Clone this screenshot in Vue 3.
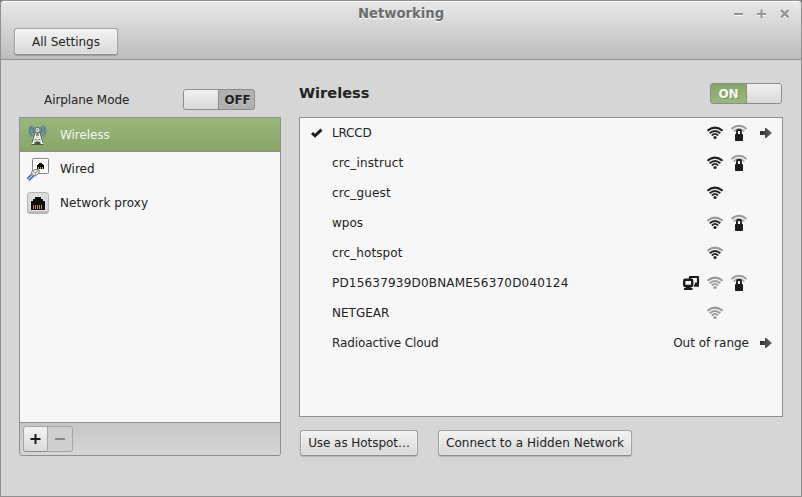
<script setup>
import { ref } from 'vue'

const devices = ref([
  { name: 'Wireless', icon: 'antenna', tracking: '-.06px' },
  { name: 'Wired', icon: 'cable' },
  { name: 'Network proxy', icon: 'socket', tracking: '.05px' },
])
const selected = ref('Wireless')

// signal: 3 = full, 2 = outer arc dimmed, 1 = weak
const networks = [
  { name: 'LRCCD', connected: true, signal: 3, secure: true, more: true, tracking: '-.2px' },
  { name: 'crc_instruct', signal: 3, secure: true, tracking: '.15px' },
  { name: 'crc_guest', signal: 3, tracking: '.15px' },
  { name: 'wpos', signal: 2, secure: true },
  { name: 'crc_hotspot', signal: 2, tracking: '.1px' },
  { name: 'PD15637939D0BNAME56370D040124', adhoc: true, signal: 1, secure: true, tracking: '.19px' },
  { name: 'NETGEAR', signal: 1 },
  { name: 'Radioactive Cloud', note: 'Out of range', more: true, tracking: '-.1px' },
]
const dark = '#222'
const dim = '#999'
const arcColor = (signal, level) => (signal >= level ? dark : dim)
</script>

<template>
  <div class="window">
    <header class="chrome">
      <div class="titlebar">
        <span class="title">Networking</span>
        <svg class="controls" width="58" height="14" viewBox="0 0 58 14">
          <g fill="none" stroke="#fff" stroke-width="2" transform="translate(0 1)">
            <path d="M1 7H10M24 7H33M28.500 2.500V11.500M48 3L55.500 10.500M55.500 3L48 10.500" />
          </g>
          <g fill="none" stroke="#929292" stroke-width="2">
            <path d="M1 7H10M24 7H33M28.500 2.500V11.500" />
            <path d="M48 3L55.500 10.500M55.500 3L48 10.500" stroke-width="2.400" />
          </g>
        </svg>
      </div>
      <button class="btn all">All Settings</button>
    </header>

    <main class="body">
      <aside class="side">
        <div class="airplane">
          <span>Airplane Mode</span>
          <div class="switch off"><i class="knob"></i><b>OFF</b></div>
        </div>
        <div class="devices">
          <ul>
            <li
              v-for="d in devices"
              :key="d.name"
              :class="{ active: d.name === selected }"
              @click="selected = d.name"
            >
              <svg v-if="d.icon === 'antenna'" width="24" height="24" viewBox="0 0 24 24">
                <g fill="none" stroke="#3f72a3" stroke-width="1.500">
                  <path d="M8.300 4Q5.800 7 8.300 10.500M14.700 4Q17.200 7 14.700 10.500" />
                  <path d="M6.300 2.500Q2.600 7.500 6.300 13M16.700 2.500Q20.400 7.500 16.700 13" stroke-opacity=".8" />
                  <path d="M4.300 3Q1.300 8 4.600 14M18.700 3Q21.700 8 18.400 14" stroke-opacity=".45" />
                </g>
                <path d="M10.500 9L7 20.500M12.500 9L16 20.500M5.500 20.500H17.500" fill="none" stroke="#4e534a" stroke-width="3" />
                <path d="M10.500 9L7 20M12.500 9L16 20M9.500 13.500H13.500M9 14L15.500 19.500M14 14L7.500 19.500M5.500 20.300H8.500M14.500 20.300H17.500" fill="none" stroke="#f4f4f2" stroke-width="1.300" />
                <circle cx="11.500" cy="7" r="2.700" fill="#e6e6e6" stroke="#555c60" />
                <circle cx="11.300" cy="6.700" r="1" fill="#8a8a8a" />
              </svg>
              <svg v-else-if="d.icon === 'cable'" width="24" height="24" viewBox="0 0 24 24">
                <rect x="6.500" y="1.500" width="16" height="15" rx=".8" fill="#fff" stroke="#85857f" />
                <path d="M11 12V8H12V7H13V6H16V7H17V8H18V12Z" fill="#080808" />
                <path d="M12.500 10V12M14.500 10V12M16.500 10V12" stroke="#b9971e" />
                <path d="M8.500 16.500L2 22.500" stroke="#3465a4" stroke-width="4" />
                <path d="M8.500 16.500L2 22.500" stroke="#a4c3e8" stroke-width="1.500" />
                <path d="M6 14L9 12.500L13 13V16L9.500 19L5.500 17.500Z" fill="#f0f0ee" stroke="#777b79" />
                <path d="M6.500 14.500L9.500 15.500L12.500 13.500M9.500 15.500V18.500" stroke="#888" fill="none" stroke-width=".8" />
              </svg>
              <svg v-else width="24" height="24" viewBox="0 0 24 24">
                <defs>
                  <linearGradient id="plate" x1="0" y1="0" x2="0" y2="1">
                    <stop offset="0" stop-color="#dedede" />
                    <stop offset=".85" stop-color="#d2d2d2" />
                    <stop offset="1" stop-color="#a6a6a6" />
                  </linearGradient>
                </defs>
                <rect x="1.500" y="1.500" width="21" height="21" rx="2.500" fill="url(#plate)" stroke="#b4b4b4" />
                <path d="M5 19V10H7V8H9V6H15V8H17V10H19V19Z" fill="#0c0c0c" stroke="#f2f2f2" stroke-width="1.200" paint-order="stroke" />
                <path d="M7 14H8V18H7ZM9 14H10V18H9ZM11 14H12V18H11ZM13 14H14V18H13ZM15 14H16V18H15Z" fill="#c99610" />
              </svg>
              <span :style="{ letterSpacing: d.tracking }">{{ d.name }}</span>
            </li>
          </ul>
          <div class="tools">
            <div class="pair">
              <button class="add" aria-label="Add">
                <svg width="11" height="11" viewBox="0 0 11 11"><path d="M.5 5H10.500M5.500 0V10" stroke="#1c1c1c" stroke-width="2" /></svg>
              </button>
              <button class="remove" aria-label="Remove">
                <svg width="11" height="11" viewBox="0 0 11 11"><path d="M0 5H10" stroke="#888" stroke-width="2" /></svg>
              </button>
            </div>
          </div>
        </div>
      </aside>

      <section class="detail">
        <div class="head">
          <h1>Wireless</h1>
          <div class="switch on"><b>ON</b><i class="knob"></i></div>
        </div>
        <ul class="networks">
          <li v-for="n in networks" :key="n.name">
            <span class="mark">
              <svg v-if="n.connected" width="12" height="10" viewBox="0 0 12 10">
                <path d="M1 5L4 7.800L10.500 1.700" fill="none" stroke="#1c1c1c" stroke-width="3" />
              </svg>
            </span>
            <span class="name" :style="{ letterSpacing: n.tracking }">{{ n.name }}</span>
            <span v-if="n.note" class="note">{{ n.note }}</span>
            <template v-else>
              <span class="slot">
                <svg v-if="n.adhoc" width="17" height="16" viewBox="0 0 17 16" fill="none" stroke="#1c1c1c">
                  <path d="M7 4V2H15V8.500H12M11 10.700H16" stroke-width="2.200" stroke-linejoin="round" />
                  <rect x="1.200" y="4.700" width="8" height="6.300" rx="1" stroke-width="2.400" />
                  <path d="M1 14H9.500" stroke-width="2" /><path d="M5.200 11V14" stroke-width="5" />
                </svg>
              </span>
              <span class="slot">
                <svg width="16" height="16" viewBox="0 0 16 16" fill="none" stroke-width="1.900">
                  <path d="M.5 5.800Q8 -.4 15.500 5.800" :stroke="arcColor(n.signal, 3)" stroke-width="2.100" />
                  <path d="M2.700 8.300Q8 3.500 13.300 8.300" :stroke="arcColor(n.signal, 2)" />
                  <path d="M4.900 10.700Q8 7.100 11.100 10.700" :stroke="arcColor(n.signal, 2)" />
                  <circle cx="8" cy="12.500" r="1.600" :fill="arcColor(n.signal, 2)" />
                </svg>
              </span>
              <span class="slot">
                <svg v-if="n.secure" width="16" height="18" viewBox="0 0 16 18" fill="none">
                  <path d="M.5 4.900Q8 -1.300 15.500 4.900" stroke="#999" stroke-width="2" />
                  <path d="M2.700 7.400Q8 2.600 13.300 7.400" stroke="#a5a5a5" stroke-width="1.900" />
                  <path d="M6 11V7.500Q6 6 7 6H9Q10 6 10 7.500V11Z" fill="#f7f7f7" stroke="#1c1c1c" stroke-width="1.900" />
                  <rect x="4" y="10" width="8" height="7" rx=".7" fill="#1c1c1c" />
                </svg>
              </span>
            </template>
            <span class="arrow">
              <svg v-if="n.more" width="12" height="10" viewBox="0 0 12 10">
                <defs>
                  <linearGradient id="shaft"><stop offset="0" stop-color="#303030" /><stop offset="1" stop-color="#626262" /></linearGradient>
                </defs>
                <path d="M0 3H5V0H6L12 5L6 10H5V7H0Z" fill="url(#shaft)" />
              </svg>
            </span>
          </li>
        </ul>
        <div class="actions">
          <button class="btn hotspot">Use as Hotspot…</button>
          <button class="btn hidden">Connect to a Hidden Network</button>
        </div>
      </section>
    </main>
  </div>
</template>

<style>
body { background: #7d7d7d; }
</style>

<style scoped>
.window {
  box-sizing: border-box;
  width: 802px;
  height: 497px;
  border: 1px solid #8f8f8f;
  border-radius: 4px 4px 0 0;
  background: #d6d6d6;
  overflow: hidden;
  font: 12px "DejaVu Sans", sans-serif;
  color: #222;
}
ul { list-style: none; margin: 0; padding: 0; }
svg { display: block; flex: none; }
button { font: inherit; color: inherit; margin: 0; cursor: default; }
.chrome {
  box-sizing: border-box;
  height: 59px;
  border-top: 1px solid #fff;
  border-bottom: 1px solid #8f8f8f;
  background: linear-gradient(#e7e7e7, #bdbdbd);
}
.titlebar {
  height: 26px;
  display: grid;
  grid-template-columns: 58px 1fr 58px;
  padding: 0 10px;
}
.title {
  grid-column: 2;
  text-align: center;
  font-weight: bold;
  font-size: 13.200px;
  line-height: 23px;
  color: #6b6b6b;
  text-shadow: 0 1px #fff;
}
.controls { margin-top: 5px; }
.btn {
  box-sizing: border-box;
  height: 26px;
  padding: 0 7px;
  border: 1px solid #a0a0a0;
  border-bottom-color: #8b8b8b;
  border-radius: 3px;
  background: linear-gradient(#f3f3f3, #d8d8d8);
  box-shadow: inset 0 0 0 1px rgba(255, 255, 255, .35), 0 1px 1px rgba(0, 0, 0, .17);
  line-height: 22px;
  white-space: nowrap;
}
.all { display: block; width: 104px; height: 27px; margin-left: 13px; padding-top: 1px; line-height: 24px; }
.hotspot { width: 118px; letter-spacing: -.06px; }
.hidden { width: 194px; letter-spacing: .04px; }
.body { display: flex; gap: 18px; padding: 0 18px; }
.side { width: 262px; padding-top: 29px; }
.airplane {
  height: 28px;
  display: flex;
  justify-content: space-between;
  padding: 0 26px 0 25px;
  line-height: 22px;
  letter-spacing: -.08px;
}
.switch {
  box-sizing: border-box;
  width: 72px;
  height: 21px;
  display: flex;
  border: 1px solid #8c8c8c;
  border-radius: 3px;
  overflow: hidden;
}
.switch b { flex: 1; text-align: center; line-height: 20px; letter-spacing: 0; }
.knob {
  box-sizing: border-box;
  width: 35px;
  background: linear-gradient(#f0f0f0, #d9d9d9);
}
.off { background: #b0b0b0; }
.off .knob { border-right: 1px solid #8c8c8c; }
.off b { padding-left: 2px; font-size: 11.800px; text-shadow: 0 1px rgba(255, 255, 255, .3); }
.on { background: linear-gradient(#86a567, #9ab87c); }
.on .knob { border-left: 1px solid #8c8c8c; }
.on b { color: #f7f7f7; text-shadow: 1px 1px #758f5b; }
.devices {
  box-sizing: border-box;
  height: 339px;
  display: flex;
  flex-direction: column;
  border: 1px solid #8f8f8f;
  border-radius: 0 0 3px 3px;
  overflow: hidden;
}
.devices ul { flex: 1; background: #f7f7f7; }
.devices li {
  box-sizing: border-box;
  height: 34px;
  display: flex;
  align-items: center;
  gap: 10px;
  padding-left: 6px;
}
.devices li.active {
  color: #f5f5f5;
  background: linear-gradient(#9ab87c, #86a567);
  box-shadow: inset 0 -1px #8b8f87;
}
.tools {
  box-sizing: border-box;
  height: 33px;
  padding: 3px;
  border-top: 1px solid #8f8f8f;
  background: linear-gradient(#c6c6c6, #d5d5d5);
}
.pair { display: flex; }
.pair button {
  box-sizing: border-box;
  width: 25px;
  height: 26px;
  padding: 0;
  display: flex;
  align-items: center;
  justify-content: center;
  border: 1px solid #a5a5a5;
}
.add { border-radius: 3px 0 0 3px; background: linear-gradient(#f3f3f3, #d9d9d9); border-bottom-color: #8b8b8b !important; }
.remove { border-left: 0 !important; border-radius: 0 3px 3px 0; background: #cfcfcf; }
.detail { width: 484px; padding-top: 23px; }
.head { height: 34px; display: flex; justify-content: space-between; padding-right: 1px; }
h1 { margin: 0; font-size: 14.600px; line-height: 20px; }
.networks {
  box-sizing: border-box;
  height: 300px;
  border: 1px solid #8f8f8f;
  background: #f7f7f7;
}
.networks li { height: 30px; display: flex; align-items: center; padding-right: 10px; }
.mark { width: 21px; padding-left: 11px; }
.name { flex: 1; }
.slot { width: 16px; margin-right: 8px; }
.slot:nth-last-child(2) { margin-right: 13px; }
.note { margin-right: 11px; }
.arrow { width: 12px; }
.actions { display: flex; gap: 20px; padding: 13px 0 0 1px; }
</style>
